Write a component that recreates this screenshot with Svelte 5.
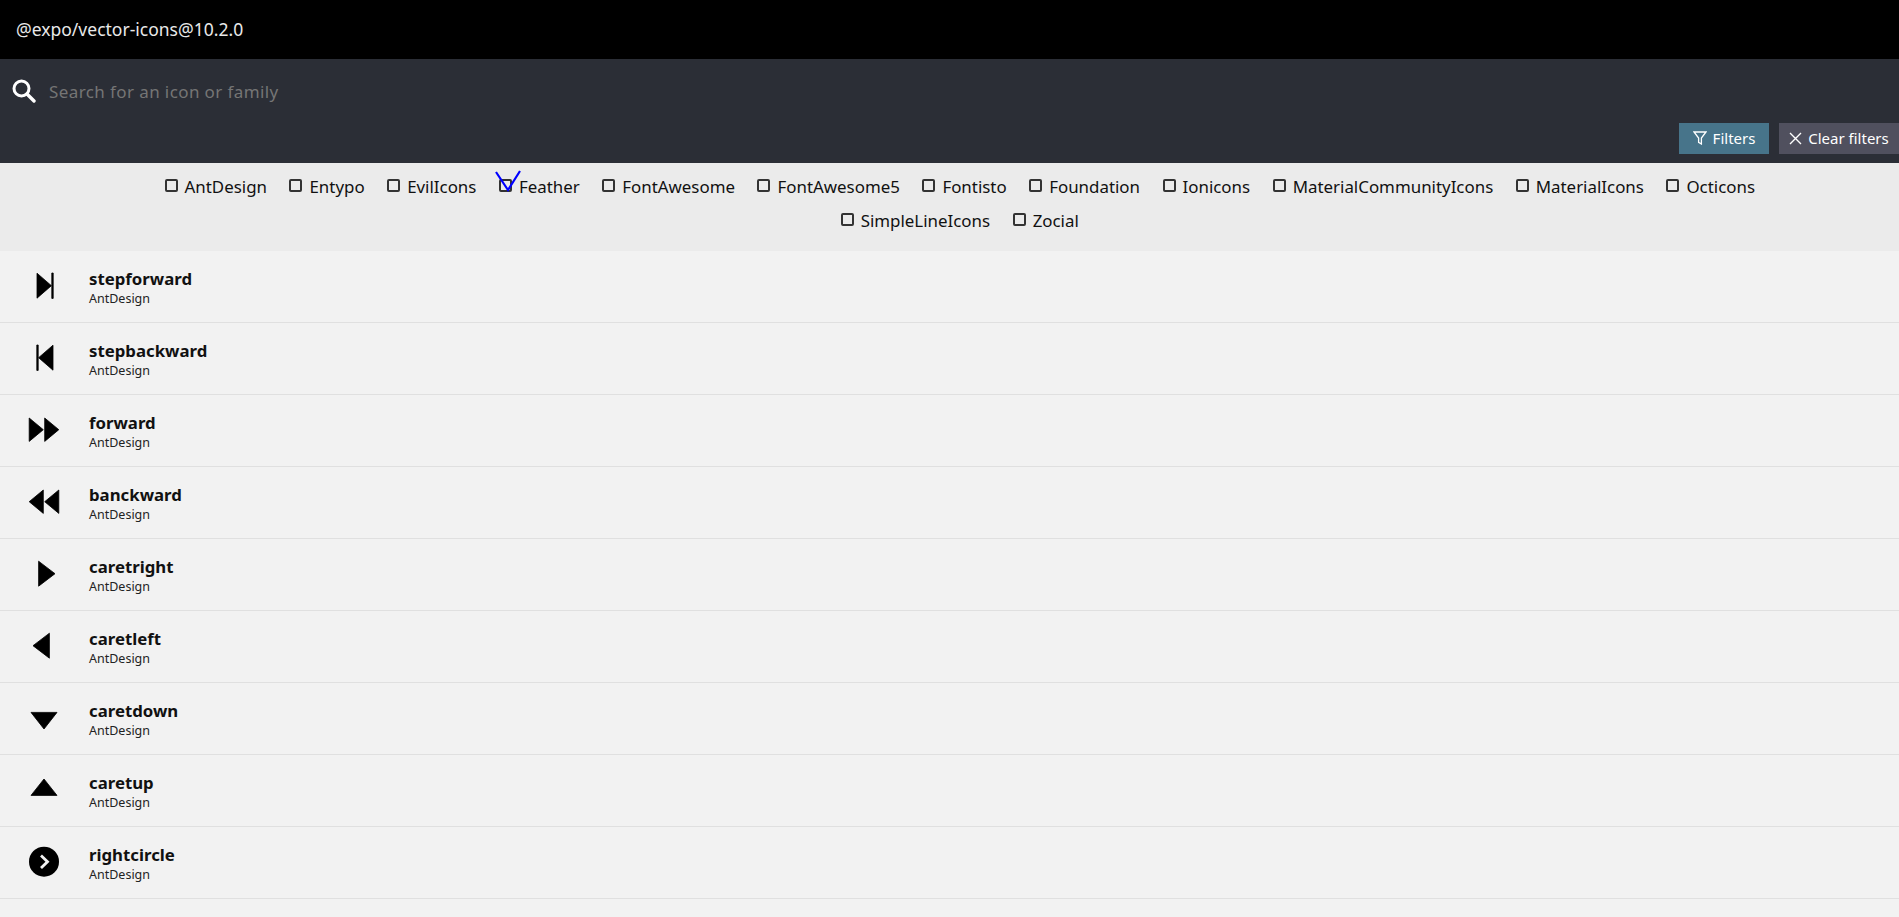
<script>
  const families = ['AntDesign', 'Entypo', 'EvilIcons', 'Feather', 'FontAwesome', 'FontAwesome5', 'Fontisto', 'Foundation', 'Ionicons', 'MaterialCommunityIcons', 'MaterialIcons', 'Octicons', 'SimpleLineIcons', 'Zocial'];

  // hand-fitted to a 40x40 box
  const icons = [
    { name: 'stepforward', d: 'M13 7.2 27.4 19.7 13 32.2ZM27.8 7h1.4v25.4h-1.4Z' },
    { name: 'stepbackward', d: 'M29 7.2 14.6 19.7 29 32.2ZM12.8 7h1.4v25.4h-1.4Z' },
    { name: 'forward', d: 'M5.2 8 19.3 19.7 5.2 31.4ZM20.7 8 34.8 19.7 20.7 31.4Z' },
    { name: 'banckward', d: 'M34.8 8 20.7 19.7 34.8 31.4ZM19.3 8 5.2 19.7 19.3 31.4Z' },
    { name: 'caretright', d: 'M14.6 7.2 31 19.7 14.6 32.2Z' },
    { name: 'caretleft', d: 'M25.4 7.2 9 19.7 25.4 32.2Z' },
    { name: 'caretdown', d: 'M7 14.4H33L20 31Z' },
    { name: 'caretup', d: 'M7 25.4H33L20 9Z' },
    { name: 'rightcircle', circle: true }
  ];
</script>

<style>
  :global(body) {
    margin: 0;
    background: #f2f2f2;
    font-family: "Noto Sans", sans-serif;
    color: #111;
  }

  .top {
    background: #000;
    color: #e9e9e9;
    height: 59px;
    box-sizing: border-box;
    display: flex;
    align-items: center;
    padding: 0 0 2px 16px;
    font-size: 17.5px;
  }

  .search {
    background: #2b2e36;
    height: 104px;
    box-sizing: border-box;
    padding: 0 0 9px 12px;
    display: flex;
    flex-direction: column;
    justify-content: space-between;
  }

  .search-row {
    display: flex;
    align-items: center;
    height: 68px;
    gap: 13px;
  }

  .search-row input {
    flex: 1;
    background: transparent;
    border: none;
    outline: none;
    font: inherit;
    font-size: 17px;
    letter-spacing: 0.4px;
    color: #fff;
    padding: 0;
  }

  .search-row input::placeholder {
    color: #757575;
    opacity: 1;
  }

  .buttons {
    display: flex;
    justify-content: flex-end;
    gap: 10px;
  }

  .btn {
    height: 31px;
    border: none;
    color: #fff;
    font: inherit;
    font-size: 15px;
    line-height: 29px;
    display: flex;
    align-items: center;
    justify-content: center;
    gap: 6px;
    padding: 0 0 1px;
  }

  .btn.filters {
    background: #47748a;
    width: 90px;
  }

  .btn.clear {
    background: #50505e;
    width: 120px;
  }

  .family-list {
    background: #ebebeb;
    height: 88px;
    box-sizing: border-box;
    padding: 6px 132px 0 130px;
    display: flex;
    flex-wrap: wrap;
    justify-content: center;
    align-content: flex-start;
  }

  .family {
    position: relative;
    display: flex;
    align-items: center;
    gap: 7px;
    height: 34px;
    margin-left: 22.5px;
    font-size: 16.9px;
  }

  .box {
    width: 13px;
    height: 13px;
    box-sizing: border-box;
    border: 2px solid #333;
    border-radius: 2px;
    margin-top: -2px;
  }

  .check {
    position: absolute;
    left: -4px;
    top: 1px;
  }

  .row {
    height: 72px;
    box-sizing: border-box;
    border-bottom: 1px solid #e0e0e0;
    display: flex;
    align-items: flex-start;
  }

  .row svg {
    margin: 15px 25px 0 24px;
    flex: none;
  }

  .name {
    font-weight: 700;
    font-size: 16.8px;
    line-height: 22px;
    margin-top: 17px;
  }

  .sub {
    font-size: 12.5px;
    line-height: 17px;
    color: #222;
  }
</style>

<header class="top">@expo/vector-icons@10.2.0</header>

<div class="search">
  <div class="search-row">
    <svg width="24" height="24" viewBox="0 0 24 24" fill="none" stroke="#fff">
      <circle cx="9.5" cy="9.5" r="7.5" stroke-width="3" />
      <path d="M15 15 22 22" stroke-width="3.4" stroke-linecap="round" />
    </svg>
    <input placeholder="Search for an icon or family" />
  </div>
  <div class="buttons">
    <button class="btn filters">
      <svg width="14" height="14" viewBox="0 0 14 14" fill="none" stroke="#fff" stroke-width="1.3"><path d="M1 1H13L8.4 7V13L5.6 11.4V7Z" /></svg>
      Filters
    </button>
    <button class="btn clear">
      <svg width="13" height="13" viewBox="0 0 13 13" fill="none" stroke="#fff" stroke-width="1.4"><path d="M1 1 12 12M12 1 1 12" /></svg>
      Clear filters
    </button>
  </div>
</div>

<div class="family-list">
  {#each families as family}
    <label class="family">
      <span class="box"></span>
      {family}
      {#if family === 'Feather'}
        <svg class="check" width="26" height="24" viewBox="0 0 26 24" fill="none" stroke="#0000ff" stroke-width="2.2"><path d="M1 2 13 20 25 1" /></svg>
      {/if}
    </label>
  {/each}
</div>

<main>
  {#each icons as icon}
    <div class="row">
      <svg width="40" height="40" viewBox="0 0 40 40">
        {#if icon.circle}
          <circle cx="20" cy="19.7" r="15" fill="#000" />
          <path d="M17 13.5 23.5 19.7 17 26" fill="none" stroke="#f2f2f2" stroke-width="2.8" />
        {:else}
          <path d={icon.d} fill="#000" stroke="#000" stroke-width="0.8" stroke-linejoin="round" />
        {/if}
      </svg>
      <div>
        <div class="name">{icon.name}</div>
        <div class="sub">AntDesign</div>
      </div>
    </div>
  {/each}
</main>
